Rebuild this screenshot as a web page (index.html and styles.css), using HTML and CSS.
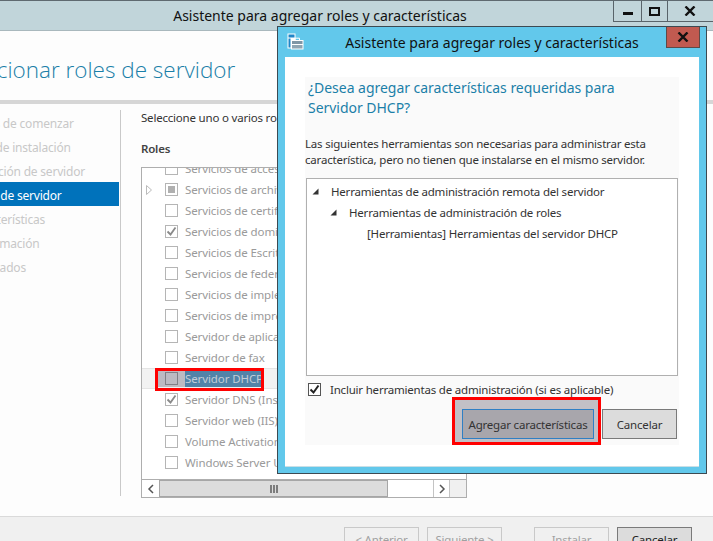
FILE: index.html
```html
<!DOCTYPE html>
<html lang="es">
<head>
<meta charset="utf-8">
<title>Asistente para agregar roles y características</title>
<link rel="stylesheet" href="styles.css">
</head>
<body>
<div class="window">
  <header class="titlebar">
    <div class="title">Asistente para agregar roles y características</div>
    <div class="controls">
      <div class="ctl ctl-min"><span class="min-glyph"></span></div>
      <div class="ctl ctl-max"><span class="max-glyph"></span></div>
      <div class="ctl ctl-close"><svg width="12" height="10" viewBox="0 0 12 10"><path d="M1.5 .5 10.5 9.5M10.5 .5 1.5 9.5" stroke="#111" stroke-width="2.4" fill="none"/></svg></div>
    </div>
  </header>
  <div class="page-head"><h1>Seleccionar roles de servidor</h1></div>
  <div class="rule"></div>
  <main class="body">
    <nav class="side">
      <div class="step s1">Antes de comenzar</div>
      <div class="step s2">Tipo de instalación</div>
      <div class="step s3">Selección de servidor</div>
      <div class="step s4 active">Roles de servidor</div>
      <div class="step s5">Características</div>
      <div class="step s6">Confirmación</div>
      <div class="step s7">Resultados</div>
    </nav>
    <section class="content">
      <p class="intro">Seleccione uno o varios roles para instalarlos en el servidor seleccionado.</p>
      <h2 class="roles-h">Roles</h2>
      <div class="listbox">
        <div class="rows">
          <div class="row"><span class="cb"></span><span class="lab">Servicios de acceso y directivas de redes</span></div>
          <div class="row"><svg class="exp" width="8" height="12" viewBox="0 0 8 12"><path d="M1.5 1.5 6.5 6 1.5 10.5Z" fill="none" stroke="#bbb"/></svg><span class="cb"><span class="partial"></span></span><span class="lab">Servicios de archivos y almacenamiento</span></div>
          <div class="row"><span class="cb"></span><span class="lab">Servicios de certificados de Active Directory</span></div>
          <div class="row"><span class="cb"><svg width="11" height="11" viewBox="0 0 11 11"><path d="M1.5 5.5 4.5 8.5 9.5 1.5" fill="none" stroke="#8a8a8a" stroke-width="1.8"/></svg></span><span class="lab">Servicios de dominio de Active Directory</span></div>
          <div class="row"><span class="cb"></span><span class="lab">Servicios de Escritorio remoto</span></div>
          <div class="row"><span class="cb"></span><span class="lab">Servicios de federación de Active Directory</span></div>
          <div class="row"><span class="cb"></span><span class="lab">Servicios de implementación de Windows</span></div>
          <div class="row"><span class="cb"></span><span class="lab">Servicios de impresión y documentos</span></div>
          <div class="row"><span class="cb"></span><span class="lab">Servidor de aplicaciones</span></div>
          <div class="row"><span class="cb"></span><span class="lab">Servidor de fax</span></div>
          <div class="row row-hot">
            <div class="hot-fill"><span class="cb cb-hot"></span></div><span class="lab lab-hot">Servidor DHCP</span>
            <div class="redbox redbox-row"></div>
          </div>
          <div class="row"><span class="cb"><svg width="11" height="11" viewBox="0 0 11 11"><path d="M1.5 5.5 4.5 8.5 9.5 1.5" fill="none" stroke="#8a8a8a" stroke-width="1.8"/></svg></span><span class="lab">Servidor DNS (Instalado)</span></div>
          <div class="row"><span class="cb"></span><span class="lab">Servidor web (IIS)</span></div>
          <div class="row"><span class="cb"></span><span class="lab">Volume Activation Services</span></div>
          <div class="row"><span class="cb"></span><span class="lab">Windows Server Update Services</span></div>
        </div>
        <div class="hscroll">
          <div class="sb-btn"><svg width="8" height="10" viewBox="0 0 8 10"><path d="M6 1 2 5 6 9" fill="none" stroke="#555" stroke-width="1.5"/></svg></div>
          <div class="sb-thumb"><svg width="8" height="8" viewBox="0 0 8 8"><path d="M1 0V8M4 0V8M7 0V8" stroke="#555" stroke-width="1.4"/></svg></div>
          <div class="sb-track"></div>
          <div class="sb-btn sb-right"><svg width="8" height="10" viewBox="0 0 8 10"><path d="M2 1 6 5 2 9" fill="none" stroke="#555" stroke-width="1.5"/></svg></div>
          <div class="sb-corner"></div>
        </div>
      </div>
    </section>
  </main>
  <footer class="foot">
    <button class="fbtn">&lt; Anterior</button>
    <button class="fbtn">Siguiente &gt;</button>
    <button class="fbtn fbtn-gap">Instalar</button>
    <button class="fbtn fbtn-on">Cancelar</button>
  </footer>
</div>

<div class="dialog">
  <div class="dlg-title">
    <svg class="dlg-icon" width="17" height="17" viewBox="0 0 17 17"><rect x="0.5" y="0.5" width="8" height="15" fill="#fff"/><rect x="1.5" y="1.5" width="6" height="3" fill="#1f86c8"/><rect x="1.5" y="5.5" width="2" height="9" fill="#1f86c8"/><rect x="4" y="7" width="12.5" height="9.5" fill="#fff"/><path d="M8 7V5.2H12.5V7" fill="none" stroke="#fff"/><rect x="5" y="8" width="10.5" height="3" fill="#7f96a6"/><rect x="5" y="12" width="10.5" height="3.5" fill="#8fa5b3"/></svg>
    <span class="dlg-title-text">Asistente para agregar roles y características</span>
    <div class="dlg-close"><svg width="12" height="10" viewBox="0 0 12 10"><path d="M1.5 .5 10.5 9.5M10.5 .5 1.5 9.5" stroke="#111" stroke-width="2.4" fill="none"/></svg></div>
  </div>
  <div class="dlg-client">
    <div class="dlg-panel">
      <h3 class="dlg-h">¿Desea agregar características requeridas para Servidor DHCP?</h3>
      <p class="dlg-p">Las siguientes herramientas son necesarias para administrar esta característica, pero no tienen que instalarse en el mismo servidor.</p>
      <div class="tree">
        <div class="node n1"><svg class="tri" width="7" height="7" viewBox="0 0 7 7"><path d="M6.5 .5V6.5H.5Z" fill="#333"/></svg>Herramientas de administración remota del servidor</div>
        <div class="node n2"><svg class="tri" width="7" height="7" viewBox="0 0 7 7"><path d="M6.5 .5V6.5H.5Z" fill="#333"/></svg>Herramientas de administración de roles</div>
        <div class="node n3">[Herramientas] Herramientas del servidor DHCP</div>
      </div>
      <label class="incl"><span class="cb cb-dark"><svg width="11" height="11" viewBox="0 0 11 11"><path d="M1.5 5.5 4.5 8.5 9.5 1.5" fill="none" stroke="#222" stroke-width="2"/></svg></span>Incluir herramientas de administración (si es aplicable)</label>
      <div class="dlg-actions">
        <div class="redbox-btn"><button class="dbtn dbtn-add">Agregar características</button></div>
        <button class="dbtn dbtn-cancel">Cancelar</button>
      </div>
    </div>
  </div>
</div>
</body>
</html>
```
FILE: styles.css
```css
* { box-sizing: border-box; }
html, body { margin: 0; padding: 0; }
body {
  width: 713px; height: 541px; overflow: hidden; position: relative;
  font-family: "Noto Sans", "Open Sans", sans-serif; font-size: 11.5px; letter-spacing: -0.2px; color: #333; background: #fdfdfd;
}
.window { width: 713px; height: 541px; display: flex; flex-direction: column; background: #fdfdfd; }

.titlebar { flex: 0 0 31px; display: flex; background: #c1d5da; border-top: 1px solid #5f6a70; border-bottom: 1px solid #a9b8bd; }
.title { width: 613px; padding-left: 27px; text-align: center; font-size: 14px; letter-spacing: 0; line-height: 29px; color: #111; white-space: nowrap; }
.controls { flex: 1; display: flex; height: 21px; border-left: 1px solid #59646a; border-bottom: 1px solid #59646a; }
.ctl { display: flex; align-items: center; justify-content: center; }
.ctl-min { width: 28px; border-right: 1px solid #59646a; }
.ctl-max { width: 26px; border-right: 1px solid #59646a; }
.ctl-close { flex: 1; padding-right: 1px; }
.min-glyph { width: 10px; height: 3px; background: #111; margin-top: 5px; }
.max-glyph { width: 11px; height: 9px; border: 2px solid #111; }

.page-head { flex: 0 0 69px; overflow: hidden; }
.page-head h1 { margin: 23px 0 0 -56px; font-weight: 300; font-family: "Open Sans", sans-serif; font-size: 22.5px; letter-spacing: 0; line-height: 32px; color: #1b7fa8; white-space: nowrap; }
.rule { flex: 0 0 4px; background: #d6d6d6; }

.body { flex: 1; display: flex; min-height: 0; padding-top: 6px; }
.side { width: 121px; height: 386px; border-right: 1px solid #c9c9c9; display: flex; flex-direction: column; overflow: hidden; }
.step { width: 119px; height: 24px; line-height: 28px; font-size: 12px; color: #c8c8c8; white-space: nowrap; flex: none; overflow: hidden; }
.s1 { text-indent: -31px; }
.s2 { text-indent: -31px; }
.s3 { text-indent: -30px; }
.s4 { text-indent: -32px; }
.s5 { text-indent: -34px; }
.s6 { text-indent: -34px; }
.s7 { text-indent: -34px; }
.active { background: #0072bb; color: #fff; }

.content { flex: 1; padding: 0 0 0 20px; min-width: 0; }
.intro { margin: 0; line-height: 16px; color: #333; white-space: nowrap; height: 16px; }
.roles-h { margin: 15px 0 0; font-size: 11.5px; font-weight: 600; line-height: 16px; color: #444; height: 16px; }
.listbox { margin-top: 10px; width: 326px; height: 331px; border: 1px solid #aeaeae; display: flex; flex-direction: column; overflow: hidden; background: #fff; }
.rows { flex: 1; min-height: 0; margin-top: -10px; overflow: visible; }
.row { position: relative; height: 21px; display: flex; align-items: center; padding-left: 23px; white-space: nowrap; }
.row:nth-child(2) { padding-left: 3px; }
.exp { margin-right: 12px; }
.cb { flex: none; width: 13px; height: 13px; border: 1px solid #b5b5b5; background: #fff; display: inline-flex; align-items: center; justify-content: center; }
.partial { width: 7px; height: 7px; background: #b0b0b0; }
.lab { margin-left: 7px; color: #9a9a9a; letter-spacing: -0.1px; }
.row-hot { padding-left: 0; background: #f2f2f2; border-top: 1px solid #e4e4e4; border-bottom: 1px solid #e4e4e4; overflow: visible; }
.hot-fill { margin-left: 16px; width: 27px; height: 17px; background: #bcbac2; padding-left: 7px; display: flex; align-items: center; }
.cb-hot { background: #bcbac2; border-color: #807f86; }
.lab-hot { margin-left: 0; width: 76px; height: 17px; line-height: 17px; background: #5283a8; color: #c4ced8; overflow: hidden; }
.redbox { position: absolute; border: 3px solid #f00; pointer-events: none; }
.redbox-row { left: 13px; top: -1px; width: 109px; height: 23px; }

.hscroll { flex: 0 0 18px; display: flex; border-top: 1px solid #aeaeae; background: #fff; }
.sb-btn { width: 17px; display: flex; align-items: center; justify-content: center; }
.sb-thumb { width: 229px; background: #dcdcdc; border: 1px solid #a6a6a6; display: flex; align-items: center; justify-content: center; }
.sb-track { width: 45px; }
.sb-right { border-left: 1px solid #c4c4c4; border-right: 1px solid #c4c4c4; }
.sb-corner { flex: 1; background: #f0f0f0; }

.foot { flex: 0 0 25px; background: #f0f0f0; border-top: 1px solid #dadada; display: flex; gap: 8px; padding: 10px 0 0 344px; overflow: hidden; }
.fbtn { width: 75px; height: 24px; flex: none; background: #f0f0f0; border: 1px solid #c9c9c9; color: #a0a0a0; font: 11.5px "Noto Sans", sans-serif; letter-spacing: -0.2px; padding: 0; }
.fbtn-gap { margin-left: 24px; }
.fbtn-on { background: #dcdcdc; border-color: #7a7a7a; color: #222; }

.dialog { position: absolute; left: 277px; top: 26px; width: 430px; height: 448px; border: 1px solid #3c4a52; background: #62c8eb; display: flex; flex-direction: column; padding: 0 7px 7px; }
.dlg-title { position: relative; flex: 0 0 30px; display: flex; align-items: center; }
.dlg-icon { position: absolute; left: 2px; top: 6px; }
.dlg-title-text { width: 100%; text-align: center; font-size: 14px; letter-spacing: 0; color: #111; white-space: nowrap; }
.dlg-close { position: absolute; right: -1px; top: 0; width: 34px; height: 21px; background: #c15a50; border: 1px solid #5e4a48; border-top: 0; display: flex; align-items: center; justify-content: center; }
.dlg-client { flex: 1; background: #fff; padding: 20px 20px 21px; border-bottom: 1px solid #c9dfe6; }
.dlg-panel { height: 100%; background: #fafafa; display: flex; flex-direction: column; }
.dlg-h { margin: 0; padding: 1px 0 0 3px; width: 340px; font-weight: 400; font-size: 14px; letter-spacing: -0.03px; line-height: 20px; color: #1b7fa8; }
.dlg-p { margin: 18px 0 0; line-height: 16px; color: #333; width: 360px; height: 32px; }
.tree { margin: 10px 0 0 1px; width: 372px; height: 198px; border: 1px solid #b0b0b0; background: #fff; padding-top: 2px; }
.node { height: 21px; line-height: 21px; color: #333; white-space: nowrap; display: flex; align-items: center; }
.tri { margin-right: 12px; flex: none; }
.n1 { padding-left: 5px; }
.n2 { padding-left: 23px; }
.n3 { padding-left: 60px; }
.incl { margin: 6px 0 0 3px; height: 15px; display: flex; align-items: center; color: #333; white-space: nowrap; }
.cb-dark { border-color: #555; margin-right: 9px; }
.dlg-actions { margin-top: 0; padding-right: 2px; display: flex; justify-content: flex-end; align-items: flex-end; }
.redbox-btn { width: 149px; height: 48px; border: 3px solid #f00; background: #c2c0c6; padding: 9px 7px 3px; }
.dbtn { height: 30px; padding: 0; font: 11.5px "Noto Sans", sans-serif; letter-spacing: -0.2px; color: #333; white-space: nowrap; }
.dbtn-add { width: 132px; background: #a8a6ac; border: 1px solid #2f7fc4; }
.dbtn-cancel { width: 75px; margin: 0 0 6px 1px; background: #dcdcdc; border: 1px solid #7a7a7a; }
```
